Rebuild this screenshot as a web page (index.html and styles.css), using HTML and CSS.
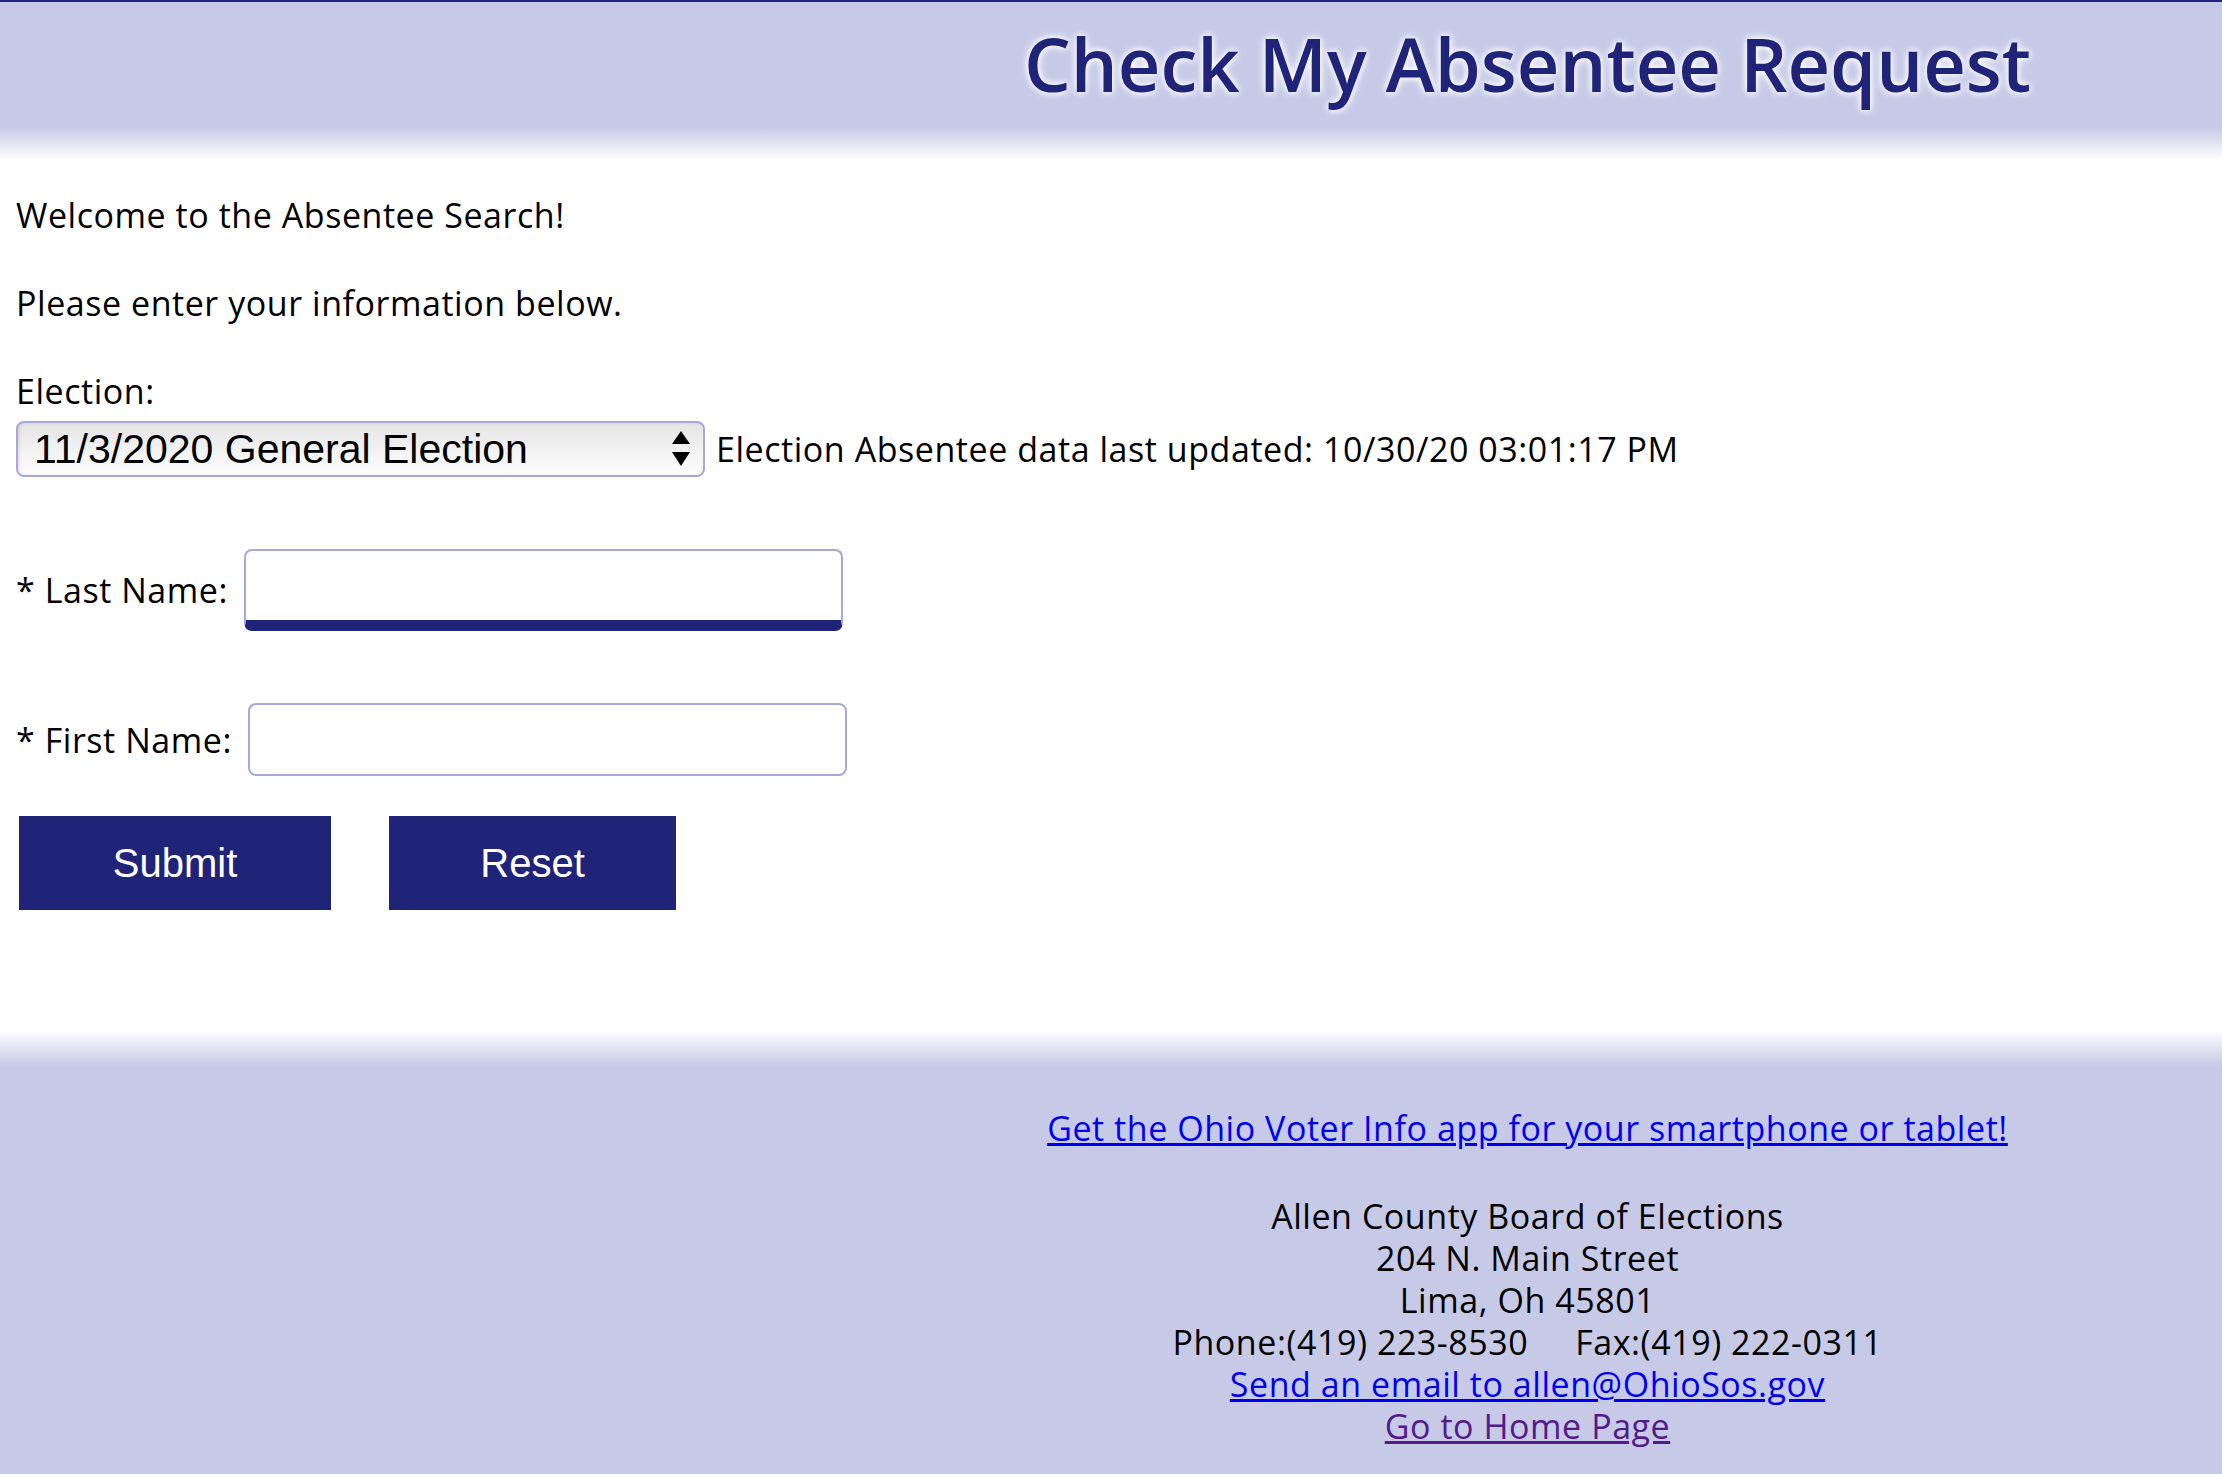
FILE: index.html
```html
<!DOCTYPE html>
<html lang="en">
<head>
  <meta charset="UTF-8" />
  <title>Check My Absentee Request</title>
  <link rel="stylesheet" href="styles.css">
</head>
<body>
  <div class="header">
    <div class="side"></div>
    <h1>Check My Absentee Request</h1>
  </div>

  <div class="content">
    <p class="intro">Welcome to the Absentee Search!</p>
    <p class="intro">Please enter your information below.</p>

    <div class="label">Election:</div>
    <div class="election-row">
      <div class="select-wrap">
        <select class="election-select">
          <option>11/3/2020 General Election</option>
        </select>
        <svg class="select-arrows" width="18" height="36" viewBox="0 0 18 36">
          <polygon points="9,0 18,13 0,13" fill="#000"/>
          <polygon points="0,21 18,21 9,35" fill="#000"/>
        </svg>
      </div>
      <span class="updated">Election Absentee data last updated: 10/30/20 03:01:17 PM</span>
    </div>

    <div class="field-row last">
      <label for="lastName">* Last Name:</label>
      <input type="text" id="lastName" class="name-input focused">
    </div>

    <div class="field-row first">
      <label for="firstName">* First Name:</label>
      <input type="text" id="firstName" class="name-input">
    </div>

    <div class="buttons">
      <button class="btn submit-btn">Submit</button>
      <button class="btn reset-btn">Reset</button>
    </div>
  </div>

  <div class="footer">
    <div class="side"></div>
    <div class="footer-info">
      <a class="app-link" href="#">Get the Ohio Voter Info app for your smartphone or tablet!</a>
      <div class="address">
        Allen County Board of Elections<br>
        204 N. Main Street<br>
        Lima, Oh 45801<br>
        Phone:(419) 223-8530&nbsp;&nbsp;&nbsp;&nbsp;&nbsp;Fax:(419) 222-0311<br>
        <a href="#">Send an email to allen@OhioSos.gov</a><br>
        <a class="visited" href="#">Go to Home Page</a>
      </div>
    </div>
  </div>
</body>
</html>
```

FILE: styles.css
```css
html, body {
  margin: 0;
  padding: 0;
}
body {
  font-family: 'Open Sans', 'Noto Sans', sans-serif;
  font-size: 34px;
  letter-spacing: 0.55px;
  color: #000;
  background: #fff;
  min-height: 1474px;
  display: flex;
  flex-direction: column;
}
.header {
  border-top: 2px solid #1f2479;
  height: 158px;
  background: linear-gradient(to bottom, #c6cae7 0%, #c6cae7 79%, #fff 100%);
  display: grid;
  grid-template-columns: 833px 1fr;
}
.header h1 {
  margin: 0;
  padding-top: 14px;
  text-align: center;
  font-size: 74px;
  font-weight: 600;
  letter-spacing: 0;
  line-height: 96px;
  color: #1f2479;
  text-shadow: 0 0 6px #fff, 0 0 10px #fff;
}
.content {
  padding: 35px 16px 0 16px;
  flex: 1;
}
.intro {
  margin: 0 0 48px 0;
  line-height: 40px;
}
.label {
  line-height: 40px;
  margin-top: 1px;
}
.election-row {
  display: flex;
  align-items: center;
  gap: 11px;
  margin-top: 10px;
}
.select-wrap {
  position: relative;
}
.election-select {
  appearance: none;
  -webkit-appearance: none;
  width: 689px;
  height: 56px;
  padding: 0 40px 0 16px;
  font-family: 'Liberation Sans', Arial, sans-serif;
  font-size: 41px;
  letter-spacing: 0;
  color: #000;
  border: 2px solid #a3aadb;
  border-radius: 8px;
  background: linear-gradient(to bottom, #e4e4e4 0%, #f4f4f4 60%, #fdfdfd 100%);
  box-shadow: inset 2px 0 3px rgba(0,0,0,0.08);
}
.select-arrows {
  position: absolute;
  right: 15px;
  top: 10px;
  pointer-events: none;
}
.updated {
  line-height: 40px;
}
.field-row {
  display: flex;
  align-items: center;
  gap: 16px;
}
.field-row.last {
  margin-top: 72px;
}
.field-row.first {
  margin-top: 72px;
}
.field-row label {
  line-height: 40px;
}
.name-input {
  width: 599px;
  height: 73px;
  box-sizing: border-box;
  border: 2px solid #a3aadb;
  border-radius: 8px;
  background: #fff;
  font-size: 32px;
  padding: 0 12px;
  outline: none;
}
.name-input.focused {
  height: 82px;
  border-bottom: 11px solid #1f2479;
}
.buttons {
  display: flex;
  gap: 58px;
  margin-top: 40px;
  padding-left: 3px;
}
.btn {
  height: 94px;
  border: none;
  background: #1f2479;
  color: #fff;
  font-family: 'Liberation Sans', Arial, sans-serif;
  font-size: 40px;
  letter-spacing: 0;
  cursor: pointer;
  padding: 0;
}
.submit-btn {
  width: 312px;
}
.reset-btn {
  width: 287px;
}
.footer {
  height: 444px;
  background: linear-gradient(to bottom, #fff 0px, #c6cae7 36px, #c6cae7 100%);
  display: grid;
  grid-template-columns: 833px 1fr;
}
.footer-info {
  text-align: center;
  padding-top: 77px;
  line-height: 42px;
}
.footer a {
  color: #0000ee;
}
.footer a.visited {
  color: #551a8b;
}
.address {
  margin-top: 46px;
}
```
